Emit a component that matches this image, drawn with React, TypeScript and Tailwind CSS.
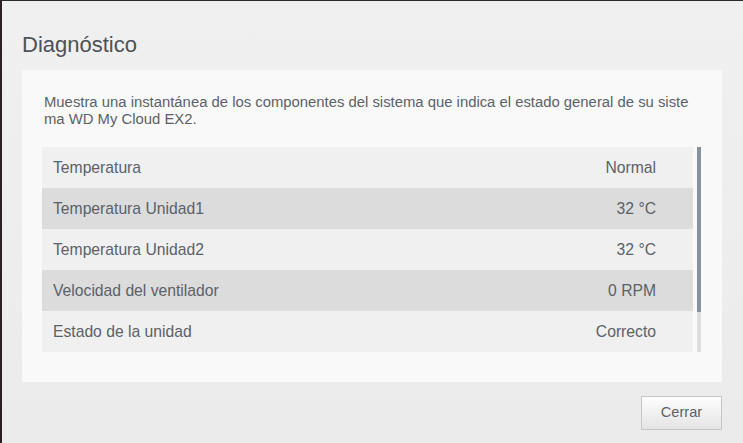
const ROWS = [
  { label: "Temperatura", value: "Normal" },
  { label: "Temperatura Unidad1", value: "32 °C" },
  { label: "Temperatura Unidad2", value: "32 °C" },
  { label: "Velocidad del ventilador", value: "0 RPM" },
  { label: "Estado de la unidad", value: "Correcto" },
];

export default function App() {
  return (
    <div
      className="flex h-[443px] w-[743px] overflow-hidden border-t border-l-2 border-t-[#2b2b2b] border-l-[#2a2222] text-[#5b6168]"
      style={{ fontFamily: '"Liberation Sans", Arial, sans-serif' }}
    >
      <div className="flex flex-1 flex-col bg-gradient-to-b from-[#f0f0f0] to-[#ebebeb] pl-[20px] pr-[21px] pt-[31px]">
        <h2 className="text-[22px] leading-[26px] text-[#4d5257]">Diagnóstico</h2>

        <section className="mt-[12px] flex h-[312px] flex-col bg-[#f9f9f9] pl-[20px] pr-[21px] pt-[24px]">
          <p className="mr-[8px] pl-[2px] text-[14.85px] leading-[16.5px] break-all">
            Muestra una instantánea de los componentes del sistema que indica el estado general de su sistema WD My Cloud EX2.
          </p>

          <div className="mt-[20px] flex h-[205px] gap-[4px]">
            <div className="flex-1">
              {ROWS.map((row, i) => (
                <div
                  key={row.label}
                  className={`flex h-[41px] items-center justify-between pl-[11px] pr-[37px] text-[15.7px] ${
                    i % 2 === 1 ? "bg-[#dcdcdc]" : "bg-[#f0f0f0]"
                  }`}
                >
                  <span>{row.label}</span>
                  <span>{row.value}</span>
                </div>
              ))}
            </div>
            <div className="flex w-[4px] flex-col bg-[#dddddd]">
              <div className="h-[165px] bg-[#87929c]" />
            </div>
          </div>
        </section>

        <div className="mt-[14px] flex justify-end">
          <button className="h-[34px] w-[81px] border border-[#c6c6c6] bg-gradient-to-b from-[#fdfdfd] to-[#e4e4e4] text-[14.6px] text-[#5b6168]">
            Cerrar
          </button>
        </div>
      </div>
    </div>
  );
}
